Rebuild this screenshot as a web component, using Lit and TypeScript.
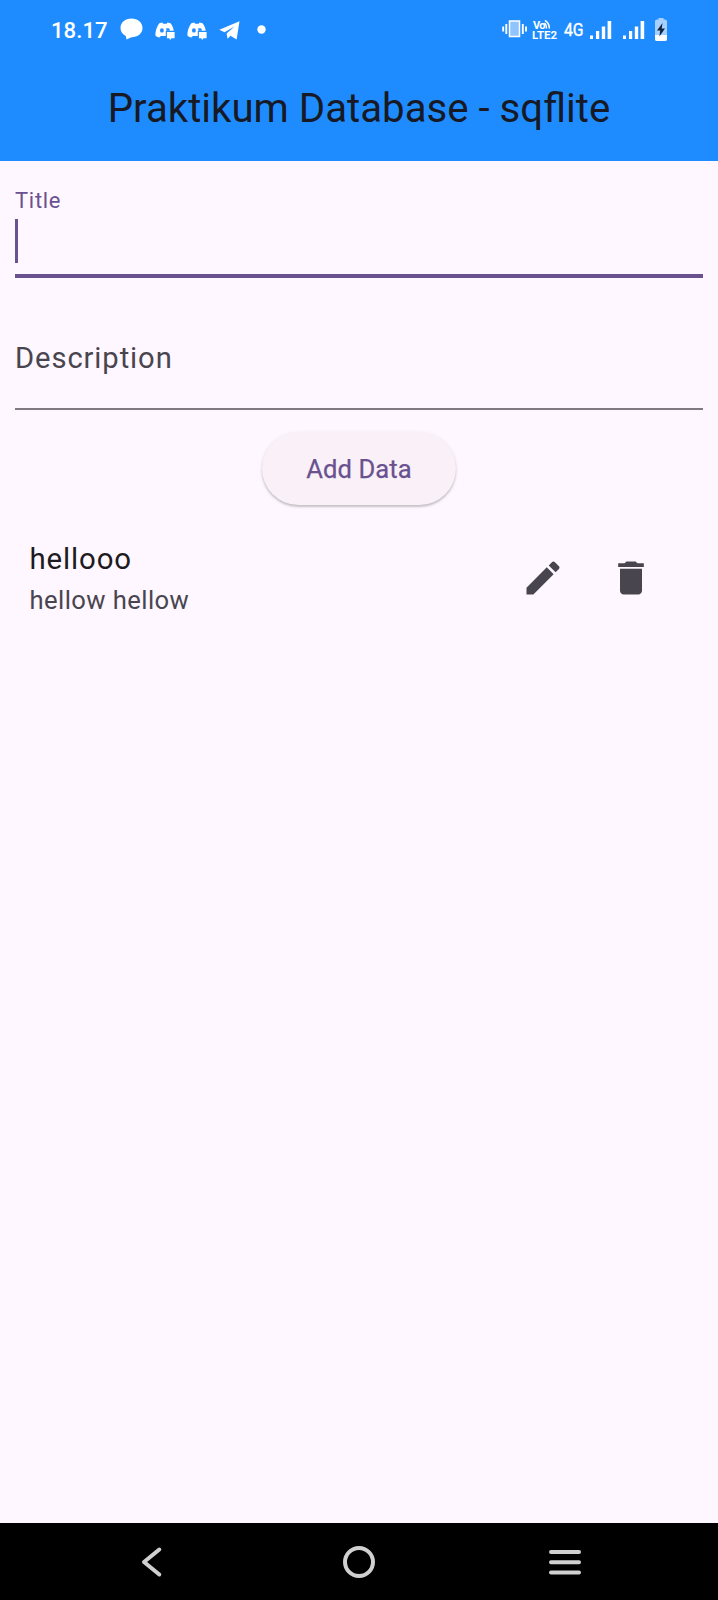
import { LitElement, html, css, svg } from "lit";
import { customElement, state } from "lit/decorators.js";

const discord = html`<svg class="discord" width="20" height="18" viewBox="0 0 20 18">
  <path fill="#fff" fill-rule="evenodd" d="M4.300 1.200 7.300.6l.8 1.200h3.600L12.600.6l3 .6c1.800 2.300 2.700 4.600 3.100 7.600H10.800v5.300H5.800l-1.300 1.500C2.600 15.200 1.300 14.600.4 13.600.3 8.800 1.700 4.500 4.300 1.200ZM6.900 6.200a1.900 2.200 0 1 0 0 4.400 1.900 2.200 0 0 0 0-4.400Z"/>
  <path fill="#1e8cff" d="M11.300 6.200h1.800a2 2 0 0 1 1.500 2.600h-3.300Z"/>
  <path fill="#fff" d="M11.900 9.900h7.700v6.300h-3.200L15.200 18l-1-1.800h-2.300Z"/>
</svg>`;

const bars = svg`
  <rect x="0" y="14.500" width="3" height="3.500"/>
  <rect x="6" y="10" width="3.200" height="8"/>
  <rect x="11.800" y="5.500" width="3.400" height="12.500"/>
  <rect x="17.600" y="0" width="3.600" height="18"/>`;

@customElement("status-bar")
export class StatusBar extends LitElement {
  static styles = css`
    :host { display: flex; height: 57px; box-sizing: border-box; padding: 1px 51px 0 51px; justify-content: space-between; font-family: Roboto, sans-serif; color: #fff; }
    .group { display: flex; align-items: center; height: 56px; }
    svg { display: block; flex: none; overflow: visible; }
    .time { font-size: 22.2px; font-weight: 500; line-height: 28px; width: 69px; margin-top: 2px; white-space: nowrap; }
    .bubble { margin-right: 11.500px; }
    .discord { margin-right: 12.300px; margin-top: 3px; }
    .plane { margin-right: 17px; margin-top: 2px; }
    .dot { margin-top: 0; }
    .vibrate { margin-right: 5px; }
    .volte { margin-right: 7px; }
    .net { font-size: 19px; line-height: 24px; width: 26px; margin-top: 2px; -webkit-text-stroke: 0.4px #fff; }
    .net span { display: inline-block; transform: scaleX(0.83); transform-origin: left; }
    .signal { margin-right: 11.500px; fill: #fff; margin-top: 1px; }
    .small { font: 700 11px Roboto, sans-serif; fill: #fff; }
  `;
  render() {
    return html`
      <div class="group">
        <span class="time">18.17</span>
        <svg class="bubble" width="23" height="22" viewBox="0 0 23 22"><path fill="#fff" d="M11.500.5C17.800.5 22.500 4.500 22.500 10S17.800 19.300 11.500 19.300L6.500 21.500 5.800 18C2.500 16.300.5 13.500.5 10 .5 4.500 5.200.5 11.500.5Z"/></svg>
        ${discord}${discord}
        <svg class="plane" width="21" height="19" viewBox="0 0 21 19"><path fill="#fff" d="M.3 8.800 20.500.3 17.600 18.500 11.500 14.800 8.600 17.800 7.600 12.600 15.500 5.500 5.500 11.300Z"/></svg>
        <svg class="dot" width="9" height="9"><circle cx="4.500" cy="4.500" r="4.200" fill="#fff"/></svg>
      </div>
      <div class="group">
        <svg class="vibrate" width="25" height="18" viewBox="0 0 25 18">
          <rect x="7.500" y="1" width="10" height="15.500" fill="#8fc4ff" stroke="#fff" stroke-width="1.500"/>
          <path fill="none" stroke="#fff" stroke-width="1.900" d="M4.300 4v10M1.200 6.500v5M20.800 4v10M24 6.500v5"/>
        </svg>
        <svg class="volte" width="25" height="22" viewBox="0 0 25 22">
          <text class="small" x="1" y="10.500" textLength="12.500">Vo</text>
          <text class="small" x="0" y="20.800" textLength="25" lengthAdjust="spacingAndGlyphs">LTE2</text>
          <path fill="none" stroke="#fff" stroke-width="1.500" d="M12.500 5q2.300 2 1.800 5.500M13 2.300q4.500 3 4.300 8.200"/>
        </svg>
        <span class="net"><span>4G</span></span>
        <svg class="signal" width="21" height="18">${bars}</svg>
        <svg class="signal" width="21" height="18">${bars}</svg>
        <svg width="12" height="23" viewBox="0 0 12 23">
          <path fill="#a6d0ff" d="M3.500 0h5v1.500H10a2 2 0 0 1 2 2v17.500a2 2 0 0 1-2 2H2a2 2 0 0 1-2-2V3.500a2 2 0 0 1 2-2h1.500Z"/>
          <path fill="#fff" d="M0 17h12v4a2 2 0 0 1-2 2H2a2 2 0 0 1-2-2Z"/>
          <path fill="#10233c" d="M7.500 5 2 12.500h3.200l-.8 6 5.600-8H6.700Z"/>
        </svg>
      </div>`;
  }
}

@customElement("app-root")
export class AppRoot extends LitElement {
  @state() private items = [{ title: "hellooo", description: "hellow hellow" }];

  static styles = css`
    :host { display: flex; flex-direction: column; height: 1600px; background: #fef7ff; font-family: Roboto, sans-serif; overflow: hidden; }
    header { background: #1e8cff; height: 160.700px; flex: none; }
    h1 { margin: 0; text-align: center; font-size: 40.2px; font-weight: 400; line-height: 104px; color: #171a25; white-space: nowrap; }
    main { flex: 1; padding: 0 15px; display: flex; flex-direction: column; }
    .field { box-sizing: border-box; flex: none; }
    .active { height: 117.300px; padding-top: 28.800px; border-bottom: 4px solid #6a518f; }
    .active .label { color: #6a518f; font-size: 22px; line-height: 24px; letter-spacing: 0.7px; }
    .caret { width: 3.400px; height: 44px; margin-top: 6px; background: #6a518f; }
    .idle { height: 132px; padding-top: 60px; border-bottom: 2px solid #7f7983; }
    .idle .label { color: #49454f; font-size: 29.2px; line-height: 40px; letter-spacing: 0.9px; }
    .add { align-self: center; margin-top: 22px; width: 194px; height: 73px; flex: none; padding: 2px 0 0; border: 0; border-radius: 37px; background: #f9f0f8; color: #6a518f; font: 400 25.600px/71px Roboto, sans-serif; letter-spacing: 0.1px; -webkit-text-stroke: 0.25px #6a518f; box-shadow: 0 2px 2px rgba(0,0,0,.18), 0 1px 4px rgba(0,0,0,.08); }
    .row { display: flex; align-items: center; justify-content: space-between; height: 116px; margin: 15.500px 28.500px 0 14.500px; }
    .title { font-size: 29.4px; line-height: 44px; letter-spacing: 0.88px; color: #1d1b20; }
    .sub { font-size: 25.600px; line-height: 39px; letter-spacing: 0.42px; color: #49454f; }
    .actions { display: flex; }
    .action { display: grid; place-items: center; width: 88px; height: 88px; }
    .action svg { fill: #49454f; }
    nav { height: 77px; flex: none; background: #000; display: flex; justify-content: space-between; align-items: center; padding: 0 136px 0 139.500px; }
    nav svg { fill: none; stroke: #d0d0d0; stroke-width: 4; stroke-linecap: round; stroke-linejoin: round; }
  `;

  render() {
    return html`
      <header><status-bar></status-bar><h1>Praktikum Database - sqflite</h1></header>
      <main>
        <div class="field active"><div class="label">Title</div><div class="caret"></div></div>
        <div class="field idle"><div class="label">Description</div></div>
        <button class="add">Add Data</button>
        ${this.items.map(item => html`
          <div class="row">
            <div><div class="title">${item.title}</div><div class="sub">${item.description}</div></div>
            <div class="actions">
              <div class="action"><svg width="44" height="44" viewBox="0 0 24 24"><path d="M3 17.250V21h3.750L17.810 9.940l-3.750-3.750L3 17.250zM20.710 7.040c.39-.39.39-1.020 0-1.410l-2.340-2.340c-.39-.39-1.020-.39-1.410 0l-1.830 1.830 3.750 3.750 1.830-1.830z"/></svg></div>
              <div class="action"><svg width="44" height="44" viewBox="0 0 24 24"><path d="M6 19c0 1.100.9 2 2 2h8c1.100 0 2-.9 2-2V7H6v12zM19 4h-3.500l-1-1h-5l-1 1H5v2h14V4z"/></svg></div>
            </div>
          </div>`)}
      </main>
      <nav>
        <svg width="31" height="34" viewBox="0 0 31 34"><path d="M19.300 4.500 4 17l15.300 12.500"/></svg>
        <svg width="34" height="34" viewBox="0 0 34 34"><circle cx="17" cy="17" r="14"/></svg>
        <svg width="34" height="34" viewBox="0 0 34 34"><path d="M3 7h28M3 17.300h28M3 27.600h28"/></svg>
      </nav>`;
  }
}
